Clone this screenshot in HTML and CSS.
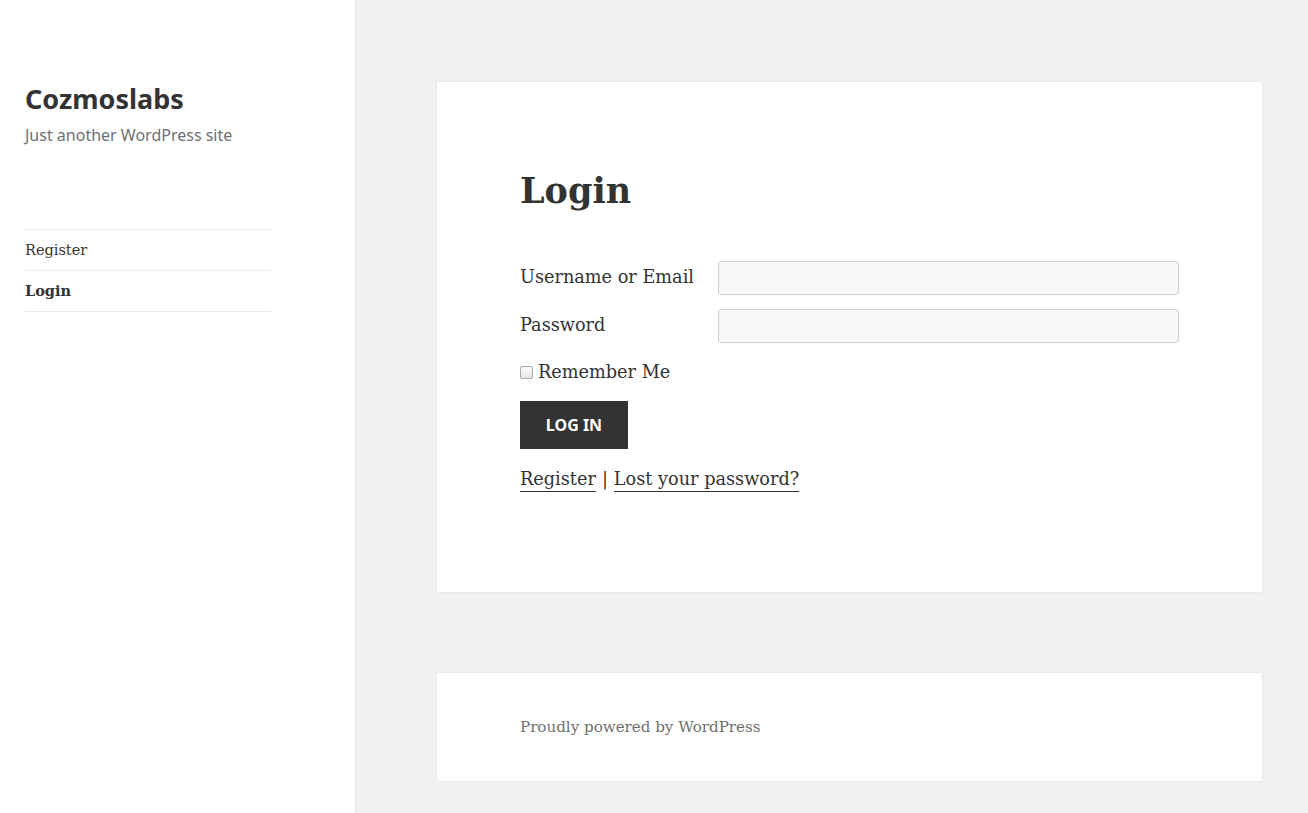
FILE: index.html
```html
<!DOCTYPE html>
<html lang="en">
<head>
    <meta charset="UTF-8">
    <meta name="viewport" content="width=device-width, initial-scale=1.0">
    <title>Login – Cozmoslabs</title>
    <link rel="stylesheet" href="styles.css">
</head>
<body>

    <div class="site">
        <!-- Sidebar -->
        <aside class="sidebar">
            <header class="site-header">
                <p class="site-title">Cozmoslabs</p>
                <p class="site-description">Just another WordPress site</p>
            </header>

            <nav class="main-nav">
                <ul>
                    <li><a href="#">Register</a></li>
                    <li class="current"><a href="#">Login</a></li>
                </ul>
            </nav>
        </aside>

        <!-- Content -->
        <main class="content">
            <article class="card entry">
                <h1 class="entry-title">Login</h1>

                <form class="login-form" onsubmit="return false;">
                    <div class="form-row">
                        <label for="user_login">Username or Email</label>
                        <input type="text" id="user_login" class="input">
                    </div>
                    <div class="form-row">
                        <label for="user_pass">Password</label>
                        <input type="password" id="user_pass" class="input">
                    </div>
                    <div class="remember">
                        <input type="checkbox" id="rememberme">
                        <label for="rememberme">Remember Me</label>
                    </div>
                    <button type="submit" class="btn">Log In</button>
                </form>

                <p class="login-links">
                    <a href="#">Register</a>
                    <span class="sep">|</span>
                    <a href="#">Lost your password?</a>
                </p>
            </article>

            <footer class="card site-footer">
                <a href="#">Proudly powered by WordPress</a>
            </footer>
        </main>
    </div>

</body>
</html>
```

FILE: styles.css
```css
* {
    margin: 0;
    padding: 0;
    box-sizing: border-box;
}

body {
    font-family: 'DejaVu Serif', 'Liberation Serif', serif;
    background-color: #f1f1f1;
    color: #333;
    height: 813px;
    overflow: hidden;
}

a {
    color: #333;
    text-decoration: none;
}

.site {
    display: flex;
    height: 100%;
}

/* Sidebar */
.sidebar {
    width: 355px;
    flex-shrink: 0;
    background-color: #fff;
    box-shadow: 1px 0 0 #e4e4e4;
    padding: 0 0 0 25px;
}

.site-header {
    padding-top: 81px;
}

.site-title {
    font-family: 'Noto Sans', 'Open Sans', sans-serif;
    font-weight: 700;
    font-size: 27px;
    line-height: 36px;
    color: #333;
}

.site-description {
    font-family: 'Noto Sans', 'Open Sans', sans-serif;
    font-size: 16px;
    line-height: 24px;
    color: #707070;
    margin-top: 6px;
}

.main-nav {
    width: 246px;
    margin-top: 82px;
}

.main-nav ul {
    list-style: none;
    border-top: 1px solid #eaeaea;
}

.main-nav li {
    border-bottom: 1px solid #eaeaea;
}

.main-nav a {
    display: block;
    font-size: 14.5px;
    line-height: 40px;
    color: #333;
}

.main-nav .current a {
    font-weight: 700;
}

/* Content */
.content {
    flex: 1;
    padding: 82px 46px 0 82px;
    display: flex;
    flex-direction: column;
    gap: 81px;
}

.card {
    background-color: #fff;
    box-shadow: 0 0 1px rgba(0, 0, 0, 0.18);
    padding: 0 83px;
}

.entry {
    height: 510px;
    padding-top: 85px;
}

.entry-title {
    font-size: 35px;
    line-height: 48px;
    font-weight: 700;
    margin-bottom: 46px;
}

.login-form {
    font-size: 17.7px;
}

.form-row {
    display: flex;
    align-items: center;
    margin-bottom: 14px;
}

.form-row label {
    width: 198px;
    flex-shrink: 0;
    padding-bottom: 2px;
}

.input {
    width: 461px;
    height: 34px;
    background-color: #f7f7f7;
    border: 1px solid #d1d1d1;
    border-radius: 3px;
    font: inherit;
    padding: 0 8px;
}

.remember {
    display: flex;
    align-items: center;
    gap: 5px;
    height: 30px;
    margin-top: 2px;
}

.remember input {
    appearance: none;
    width: 13px;
    height: 13px;
    margin: 0;
    border: 1px solid #a9a9a9;
    border-radius: 2px;
    background: linear-gradient(#fafafa, #e6e6e6);
}

.btn {
    margin-top: 14px;
    width: 108px;
    height: 48px;
    background-color: #333;
    color: #fff;
    border: 0;
    font-family: 'Noto Sans', 'Open Sans', sans-serif;
    font-weight: 700;
    font-size: 16px;
    text-transform: uppercase;
}

.login-links {
    font-size: 17.7px;
    margin-top: 18px;
    display: flex;
    align-items: baseline;
    gap: 6px;
}

.login-links a {
    border-bottom: 1px solid #333;
    line-height: 24px;
}

/* Footer */
.site-footer {
    height: 108px;
    display: flex;
    align-items: center;
    font-size: 15.1px;
}

.site-footer a {
    color: #707070;
}
```
